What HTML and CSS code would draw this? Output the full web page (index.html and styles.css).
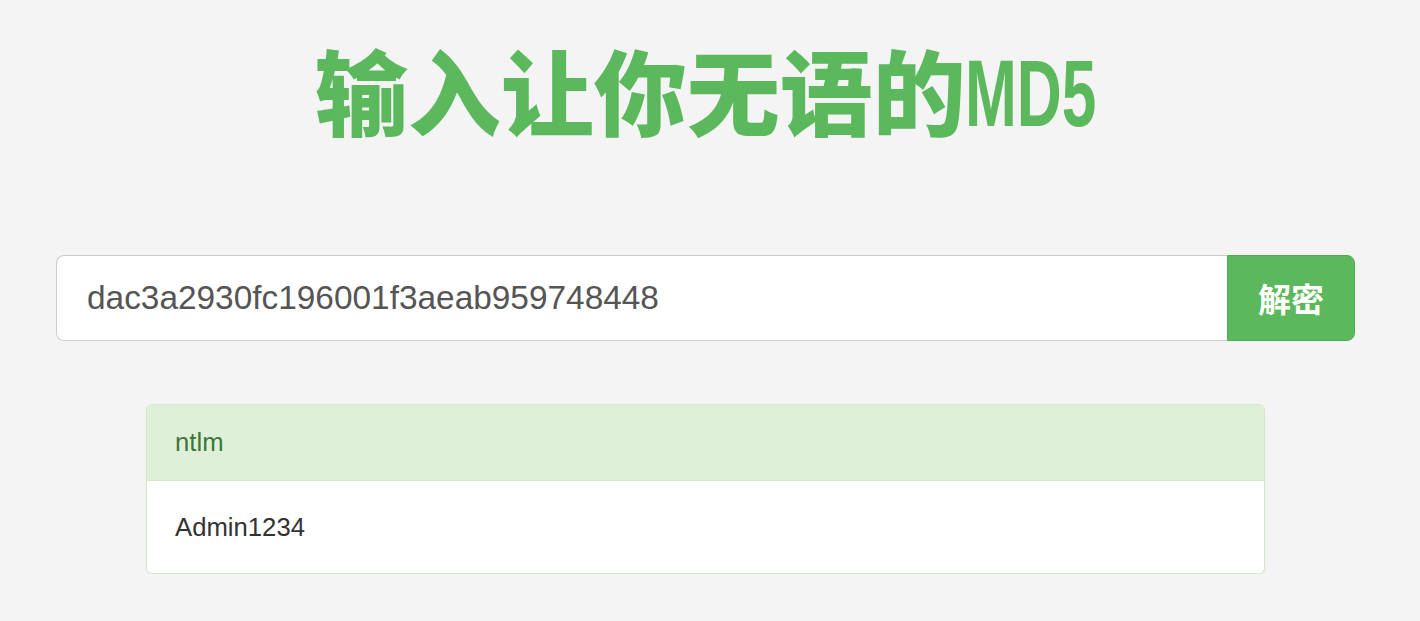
FILE: index.html
```html
<!DOCTYPE html>
<html lang="zh-CN">
<head>
    <meta charset="UTF-8">
    <title>输入让你无语的MD5</title>
    <link rel="stylesheet" href="styles.css">
</head>
<body>
    <div class="container">
        <h1 class="title">输入让你无语的<span class="latin">MD5</span></h1>
        <div class="input-group">
            <input class="hash-input" type="text" value="dac3a2930fc196001f3aeab959748448">
            <button class="decrypt-btn">解密</button>
        </div>
        <div class="result-panel">
            <div class="panel-heading">ntlm</div>
            <div class="panel-body">Admin1234</div>
        </div>
    </div>
</body>
</html>
```

FILE: styles.css
```css
/* Estilos generales */
body {
    margin: 0;
    background-color: #f4f4f4;
    font-family: "Liberation Sans", Arial, "Noto Sans CJK SC", sans-serif;
    color: #333;
}

.container {
    margin: 0 65px 0 56px;
    padding-top: 34px;
}

.title {
    margin: 0;
    height: 110px;
    text-align: center;
    color: #5cb85c;
    font-family: "Noto Sans CJK SC", sans-serif;
    font-weight: 900;
    font-size: 93px;
    line-height: 110px;
    white-space: nowrap;
}

.title .latin {
    display: inline-block;
    font-family: "Liberation Sans", sans-serif;
    font-weight: bold;
    font-size: 95px;
    line-height: 1;
    vertical-align: 3px;
    transform: scaleX(0.655);
    transform-origin: left center;
    margin-left: -1px;
    margin-right: -69px;
}

/* Campo y boton */
.input-group {
    display: flex;
    margin-top: 111px;
    height: 86px;
}

.hash-input {
    flex: 1;
    min-width: 0;
    box-sizing: border-box;
    height: 86px;
    padding: 0 30px;
    font-family: "Liberation Sans", Arial, sans-serif;
    font-size: 33.4px;
    color: #555;
    background-color: #fff;
    border: 1px solid #ccc;
    border-right: none;
    border-radius: 8px 0 0 8px;
    outline: none;
}

.decrypt-btn {
    width: 128px;
    height: 86px;
    border: 1px solid #4cae4c;
    border-radius: 0 8px 8px 0;
    background-color: #5cb85c;
    color: #fff;
    font-family: "Noto Sans CJK SC", sans-serif;
    font-weight: bold;
    font-size: 33px;
    cursor: pointer;
}

/* Panel de resultado */
.result-panel {
    margin: 63px 90px 0 90px;
    background-color: #fff;
    border: 1px solid #d6e9c6;
    border-radius: 6px;
    box-shadow: 0 1px 2px rgba(0, 0, 0, 0.05);
    overflow: hidden;
}

.panel-heading {
    height: 75px;
    line-height: 74px;
    padding: 0 28px;
    background-color: #dff0d8;
    border-bottom: 1px solid #d6e9c6;
    color: #3c763d;
    font-size: 25.7px;
}

.panel-body {
    height: 92px;
    line-height: 92px;
    padding: 0 28px;
    font-size: 25.7px;
    color: #333;
}
```
